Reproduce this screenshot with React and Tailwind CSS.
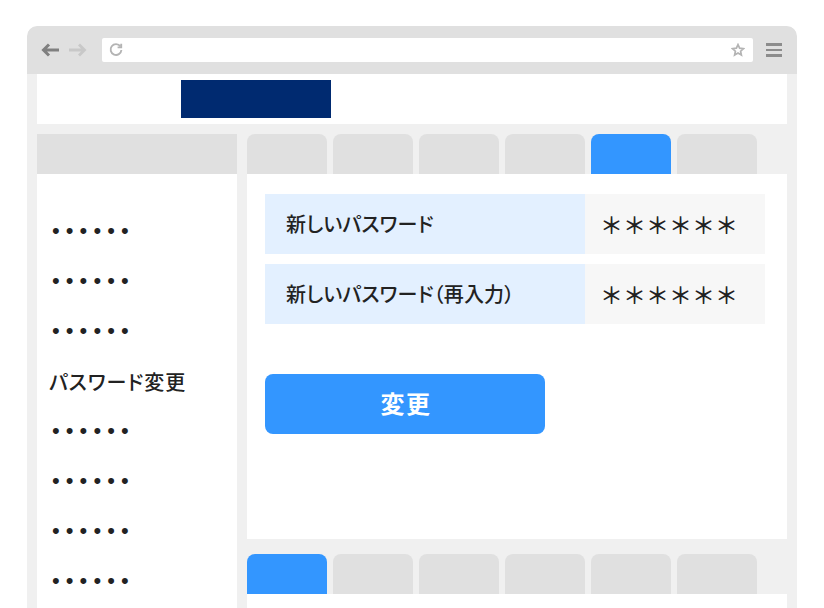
import React from 'react';

const SIDE_ITEMS = ['dots', 'dots', 'dots', 'パスワード変更', 'dots', 'dots', 'dots', 'dots'];
const TOP_TABS = [false, false, false, false, true, false];
const BOTTOM_TABS = [true, false, false, false, false, false];
const ROWS = ['新しいパスワード', '新しいパスワード（再入力）'];

function Tabs({ tabs }) {
  return (
    <div className="flex gap-[6px]">
      {tabs.map((active, i) => (
        <div
          key={i}
          className={`w-[80px] h-[40px] rounded-t-[8px] ${active ? 'bg-[#3396ff]' : 'bg-[#e0e0e0]'}`}
        />
      ))}
    </div>
  );
}

function Toolbar() {
  return (
    <div className="h-[48px] bg-[#e0e0e0] rounded-t-[10px] flex items-center pl-[14px] pr-[15px]">
      <svg className="-ml-[0.5px]" width="18" height="14" viewBox="0 0 18 14" fill="none" stroke="#808080" strokeWidth="3">
        <path d="M18 7H3M8 1.5 2.5 7 8 12.5" />
      </svg>
      <svg className="ml-[10px]" width="18" height="14" viewBox="0 0 18 14" fill="none" stroke="#c8c8c8" strokeWidth="2.8">
        <path d="M0 7h15M10 1.5 15.5 7 10 12.5" />
      </svg>
      <div className="ml-[15.5px] w-[651px] h-[24px] bg-white rounded-[2px] flex items-center justify-between pl-[7px] pr-[8px]">
        <svg width="14" height="14" viewBox="0 0 14 14" fill="none" stroke="#b4b4b4" strokeWidth="1.9">
          <path d="M11.4 3.4A5.4 5.4 0 1 0 12.4 7" />
          <path d="M12.2 .8v3.6H8.6" />
        </svg>
        <svg width="14" height="14" viewBox="0 0 14 14" fill="none" stroke="#b4b4b4" strokeWidth="1.7">
          <path d="M7 1.6 8.6 5.2l3.9.4-2.9 2.6.8 3.9L7 10.1l-3.4 2 .8-3.9-2.9-2.6 3.9-.4z" />
        </svg>
      </div>
      <div className="ml-[13px] w-[16px] flex flex-col gap-[3px]">
        <div className="h-[2.5px] bg-[#8c8c8c]" />
        <div className="h-[2.5px] bg-[#8c8c8c]" />
        <div className="h-[2.5px] bg-[#8c8c8c]" />
      </div>
    </div>
  );
}

export default function App() {
  return (
    <div
      className="h-[608px] overflow-hidden bg-white pt-[26px] pl-[27px] text-[#222222]"
      style={{ fontFamily: '"Noto Sans CJK JP", "Noto Sans", sans-serif' }}
    >
      <div className="w-[770px] h-[582px] overflow-hidden rounded-t-[10px] bg-[#f0f0f0]">
        <Toolbar />

        <div className="px-[10px]">
          {/* site header */}
          <div className="h-[50px] bg-white pt-[6px] pl-[144px]">
            <div className="w-[150px] h-[38px] bg-[#002a70]" />
          </div>

          <div className="mt-[10px] flex gap-[10px]">
            {/* side menu */}
            <div className="w-[200px]">
              <div className="h-[40px] bg-[#e0e0e0]" />
              <div className="h-[600px] bg-white pt-[32px] pl-[13px]">
                {SIDE_ITEMS.map((item, i) => (
                  <div key={i} className="h-[50px] flex items-center">
                    {item === 'dots' ? (
                      <span className="pl-[2px] pb-[2px] text-[22px] tracking-[6.1px]" style={{ fontFamily: '"Liberation Sans", sans-serif' }}>
                        ••••••
                      </span>
                    ) : (
                      <span className="-ml-[1px] pt-[2px] text-[20px] font-medium tracking-[1px]" style={{ fontFeatureSettings: '"palt"' }}>{item}</span>
                    )}
                  </div>
                ))}
              </div>
            </div>

            {/* main panel */}
            <div className="w-[540px]">
              <Tabs tabs={TOP_TABS} />
              <div className="h-[365px] bg-white pt-[20px] pl-[18px]">
                <div className="flex flex-col gap-[10px]">
                  {ROWS.map((label) => (
                    <div key={label} className="flex h-[60px] w-[500px]">
                      <div className="w-[320px] bg-[#e3f0ff] flex items-center pl-[21px] text-[20px] font-medium tracking-[0.2px] whitespace-nowrap" style={{ fontFeatureSettings: '"palt"' }}>
                        {label}
                      </div>
                      <div className="w-[180px] bg-[#f7f7f7] flex items-center pl-[15px] text-[23px] font-medium whitespace-nowrap">
                        ＊＊＊＊＊＊
                      </div>
                    </div>
                  ))}
                </div>
                <div className="mt-[50px] w-[280px] h-[60px] pb-[2px] pl-[2px] rounded-[8px] bg-[#3396ff] flex items-center justify-center text-white text-[24px] font-bold tracking-[1.5px]">
                  変更
                </div>
              </div>
              <div className="mt-[15px]">
                <Tabs tabs={BOTTOM_TABS} />
                <div className="h-[40px] bg-white" />
              </div>
            </div>
          </div>
        </div>
      </div>
    </div>
  );
}
